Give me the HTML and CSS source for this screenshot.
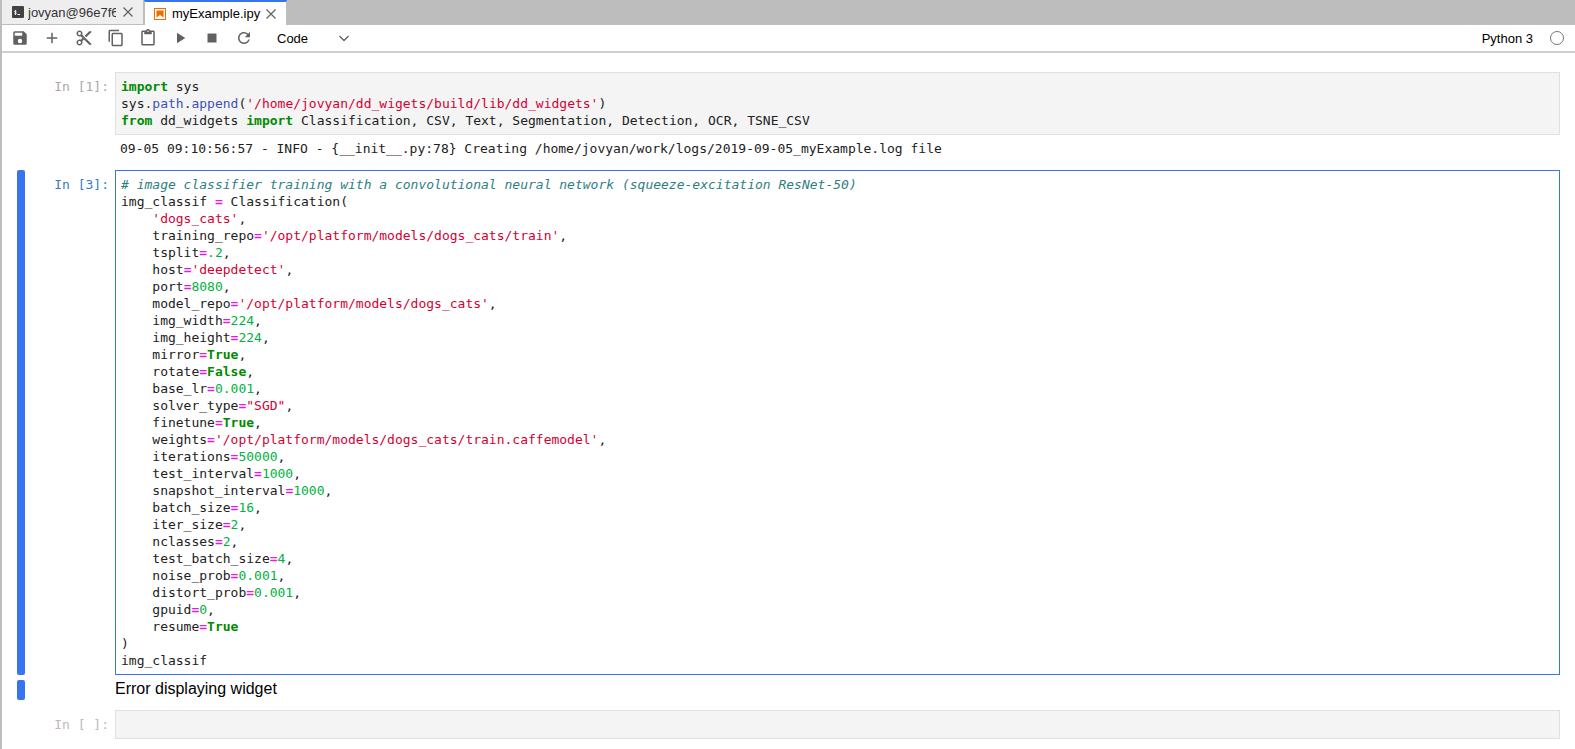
FILE: index.html
```html
<!DOCTYPE html>
<html lang="en">
<head>
    <meta charset="UTF-8">
    <title>myExample.ipynb</title>
    <link rel="stylesheet" href="styles.css">
</head>
<body>

<!-- tab bar -->
<div class="tabbar">
    <div class="tab">
        <svg class="tab-icon" width="14" height="14" viewBox="0 0 14 14"><rect x="1" y="1" width="12" height="12" rx="1" fill="#424242"/><path d="M5.500 6.200c-.4-.6-2-.6-2.100.3-.1 1 2.200.7 2.100 1.700-.1.900-1.800.9-2.200.2M4.500 5v5" fill="none" stroke="#fff" stroke-width=".8"/><rect x="6.500" y="9" width="2.500" height="1" fill="#fff"/></svg>
        <span class="tab-label">jovyan@96e7f6c</span>
        <svg class="tab-close" width="12" height="12" viewBox="0 0 12 12"><path d="M1.500 1.500l9 9M10.500 1.500l-9 9" stroke="#616161" stroke-width="1.200" fill="none"/></svg>
    </div>
    <div class="tab tab-active">
        <svg class="tab-icon" width="14" height="14" viewBox="0 0 14 14"><rect x="1.500" y="1.500" width="11" height="11" fill="none" stroke="#ef6c00"/><path d="M3.500 3.500h7v7l-3.500-2.500-3.500 2.500z" fill="#ef6c00"/></svg>
        <span class="tab-label">myExample.ipy</span>
        <svg class="tab-close" width="12" height="12" viewBox="0 0 12 12"><path d="M1.500 1.500l9 9M10.500 1.500l-9 9" stroke="#616161" stroke-width="1.200" fill="none"/></svg>
    </div>
</div>

<!-- toolbar -->
<div class="toolbar">
    <button class="tool"><svg width="18" height="18" viewBox="0 0 24 24"><path fill="#616161" d="M17 3H5a2 2 0 0 0-2 2v14a2 2 0 0 0 2 2h14a2 2 0 0 0 2-2V7l-4-4zm-5 16a3 3 0 1 1 0-6 3 3 0 0 1 0 6zm3-10H5V5h10v4z"/></svg></button>
    <button class="tool"><svg width="18" height="18" viewBox="0 0 24 24"><path fill="#616161" d="M19 13h-6v6h-2v-6H5v-2h6V5h2v6h6v2z"/></svg></button>
    <button class="tool"><svg width="18" height="18" viewBox="0 0 24 24"><path fill="#616161" d="M9.640 7.640c.23-.5.360-1.050.360-1.640 0-2.210-1.790-4-4-4S2 3.790 2 6s1.790 4 4 4c.59 0 1.140-.13 1.640-.36L10 12l-2.360 2.360C7.140 14.130 6.590 14 6 14c-2.210 0-4 1.790-4 4s1.790 4 4 4 4-1.790 4-4c0-.59-.13-1.140-.36-1.640L12 14l7 7h3v-1L9.640 7.640zM6 8c-1.100 0-2-.89-2-2s.9-2 2-2 2 .89 2 2-.9 2-2 2zm0 12c-1.100 0-2-.89-2-2s.9-2 2-2 2 .89 2 2-.9 2-2 2zm6-7.500c-.28 0-.5-.22-.5-.5s.22-.5.5-.5.500.22.500.5-.22.500-.5.500zM19 3l-6 6 2 2 7-7V3h-3z"/></svg></button>
    <button class="tool"><svg width="18" height="18" viewBox="0 0 24 24"><path fill="#616161" d="M16 1H4c-1.100 0-2 .9-2 2v14h2V3h12V1zm3 4H8c-1.100 0-2 .9-2 2v14c0 1.100.9 2 2 2h11c1.100 0 2-.9 2-2V7c0-1.100-.9-2-2-2zm0 16H8V7h11v14z"/></svg></button>
    <button class="tool"><svg width="18" height="18" viewBox="0 0 24 24"><path fill="#616161" d="M19 2h-4.180C14.400.84 13.300 0 12 0c-1.300 0-2.400.84-2.820 2H5c-1.100 0-2 .9-2 2v16c0 1.100.9 2 2 2h14c1.100 0 2-.9 2-2V4c0-1.100-.9-2-2-2zm-7 0c.55 0 1 .45 1 1s-.45 1-1 1-1-.45-1-1 .45-1 1-1zm7 18H5V4h2v3h10V4h2v16z"/></svg></button>
    <button class="tool"><svg width="18" height="18" viewBox="0 0 24 24"><path fill="#616161" d="M8 5v14l11-7z"/></svg></button>
    <button class="tool"><svg width="18" height="18" viewBox="0 0 24 24"><path fill="#616161" d="M6 6h12v12H6z"/></svg></button>
    <button class="tool"><svg width="18" height="18" viewBox="0 0 24 24"><path fill="#616161" d="M17.650 6.350A7.958 7.958 0 0 0 12 4c-4.420 0-7.990 3.580-7.990 8s3.570 8 7.990 8c3.730 0 6.840-2.550 7.730-6h-2.080A5.990 5.990 0 0 1 12 18c-3.310 0-6-2.690-6-6s2.690-6 6-6c1.660 0 3.140.69 4.220 1.780L13 11h7V4l-2.350 2.350z"/></svg></button>
    <div class="celltype">
        <span>Code</span>
        <svg width="12" height="12" viewBox="0 0 12 12"><path d="M1.500 4l4.500 4.500L10.500 4" fill="none" stroke="#616161" stroke-width="1.300"/></svg>
    </div>
    <div class="kernel">Python 3</div>
    <div class="kernel-status"></div>
</div>

<!-- notebook -->
<div class="notebook">

    <div class="cell first-cell">
        <div class="collapser"></div>
        <div class="prompt">In [1]:</div>
        <div class="editor"><pre><span class="kw">import</span> sys
sys<span class="op2">.</span><span class="prop">path</span><span class="op2">.</span><span class="prop">append</span>(<span class="str">'/home/jovyan/dd_wigets/build/lib/dd_widgets'</span>)
<span class="kw">from</span> dd_widgets <span class="kw">import</span> Classification, CSV, Text, Segmentation, Detection, OCR, TSNE_CSV</pre></div>
    </div>
    <div class="cell output-row">
        <div class="collapser"></div>
        <div class="prompt"></div>
        <pre class="output">09-05 09:10:56:57 - INFO - {__init__.py:78} Creating /home/jovyan/work/logs/2019-09-05_myExample.log file</pre>
    </div>

    <div class="cell active-cell">
        <div class="collapser on"></div>
        <div class="prompt blue">In [3]:</div>
        <div class="editor focused"><pre><span class="cmt"># image classifier training with a convolutional neural network (squeeze-excitation ResNet-50)</span>
img_classif <span class="op">=</span> Classification(
    <span class="str">'dogs_cats'</span>,
    training_repo<span class="op">=</span><span class="str">'/opt/platform/models/dogs_cats/train'</span>,
    tsplit<span class="op">=</span><span class="num">.2</span>,
    host<span class="op">=</span><span class="str">'deepdetect'</span>,
    port<span class="op">=</span><span class="num">8080</span>,
    model_repo<span class="op">=</span><span class="str">'/opt/platform/models/dogs_cats'</span>,
    img_width<span class="op">=</span><span class="num">224</span>,
    img_height<span class="op">=</span><span class="num">224</span>,
    mirror<span class="op">=</span><span class="kw">True</span>,
    rotate<span class="op">=</span><span class="kw">False</span>,
    base_lr<span class="op">=</span><span class="num">0.001</span>,
    solver_type<span class="op">=</span><span class="str">"SGD"</span>,
    finetune<span class="op">=</span><span class="kw">True</span>,
    weights<span class="op">=</span><span class="str">'/opt/platform/models/dogs_cats/train.caffemodel'</span>,
    iterations<span class="op">=</span><span class="num">50000</span>,
    test_interval<span class="op">=</span><span class="num">1000</span>,
    snapshot_interval<span class="op">=</span><span class="num">1000</span>,
    batch_size<span class="op">=</span><span class="num">16</span>,
    iter_size<span class="op">=</span><span class="num">2</span>,
    nclasses<span class="op">=</span><span class="num">2</span>,
    test_batch_size<span class="op">=</span><span class="num">4</span>,
    noise_prob<span class="op">=</span><span class="num">0.001</span>,
    distort_prob<span class="op">=</span><span class="num">0.001</span>,
    gpuid<span class="op">=</span><span class="num">0</span>,
    resume<span class="op">=</span><span class="kw">True</span>
)
img_classif</pre></div>
    </div>
    <div class="cell widget-row">
        <div class="collapser on"></div>
        <div class="prompt"></div>
        <div class="widget-error">Error displaying widget</div>
    </div>

    <div class="cell last-cell">
        <div class="collapser"></div>
        <div class="prompt dim">In [ ]:</div>
        <div class="editor empty"></div>
    </div>

</div>

</body>
</html>
```
FILE: styles.css
```css
html, body {
    margin: 0;
    padding: 0;
    height: 100%;
    overflow: hidden;
}
body {
    font-family: "Liberation Sans", Arial, sans-serif;
    background-color: #fff;
    border-left: 2px solid #bdbdbd;
    box-sizing: border-box;
    color: #000;
}
pre {
    margin: 0;
    font-family: "DejaVu Sans Mono", monospace;
    font-size: 13px;
    line-height: 17px;
    color: #212121;
}

/* tab bar */
.tabbar {
    display: flex;
    height: 25px;
    background-color: #bdbdbd;
}
.tab {
    display: flex;
    align-items: center;
    box-sizing: border-box;
    width: 142px;
    height: 24px;
    padding: 0 9px 0 9px;
    background-color: #eee;
    border-right: 1px solid #bdbdbd;
    font-size: 13px;
    color: #333;
}
.tab-active {
    width: 143px;
    height: 25px;
    background-color: #fff;
    border-top: 2px solid #3873f0;
    border-left: 1px solid #bdbdbd;
    border-right: 1px solid #bdbdbd;
    padding-left: 8px;
    color: #000;
}
.tab-label {
    flex: 1;
    overflow: hidden;
    white-space: nowrap;
    margin: 0 6px 0 3px;
}
.tab-active .tab-label {
    margin: 0 4px 0 5px;
}
.tab-icon, .tab-close {
    flex: none;
}

/* toolbar */
.toolbar {
    display: flex;
    align-items: center;
    box-sizing: border-box;
    height: 28px;
    padding: 0 11px 0 2px;
    background-color: #fff;
    border-bottom: 2px solid #cfcfcf;
}
.tool {
    display: flex;
    justify-content: center;
    align-items: center;
    width: 32px;
    height: 26px;
    padding: 0;
    border: none;
    background: none;
}
.celltype {
    display: flex;
    justify-content: space-between;
    align-items: center;
    width: 73px;
    margin-left: 17px;
    font-size: 13px;
}
.kernel {
    margin-left: auto;
    font-size: 13px;
}
.kernel-status {
    width: 12px;
    height: 12px;
    margin-left: 17px;
    border: 1.500px solid #757575;
    border-radius: 50%;
}

/* notebook */
.notebook {
    padding: 19px 15px 0 15px;
}
.cell {
    display: flex;
}
.collapser {
    flex: none;
    width: 8px;
    border-radius: 2px;
}
.collapser.on {
    background-color: #3873f0;
}
.prompt {
    flex: none;
    width: 77px;
    padding: 6px 6px 0 0;
    margin-left: 7px;
    text-align: right;
    font-family: "DejaVu Sans Mono", monospace;
    font-size: 13px;
    line-height: 17px;
    color: #aaa;
}
.prompt.blue {
    color: #307fc1;
}
.prompt.dim {
    color: #bbb;
}
.editor {
    flex: 1;
    min-width: 0;
    box-sizing: border-box;
    padding: 5px;
    background-color: #f4f4f4;
    border: 1px solid #e0e0e0;
}
.editor.focused {
    background-color: #fff;
    border-color: #3873f0;
}
.editor.empty {
    height: 29px;
}
.output {
    padding: 5px 6px 5px 5px;
}
.output-row {
    margin-bottom: 8px;
}
.active-cell {
    margin-top: 2px;
}
.widget-row {
    margin-top: 5px;
    height: 20px;
}
.widget-error {
    font-size: 16px;
    line-height: 18px;
}
.last-cell {
    margin-top: 10px;
}
.kw {
    color: #008a00;
    font-weight: bold;
}
.op {
    color: #e01ee0;
    font-weight: bold;
}
.op2 {
    color: #333;
}
.prop {
    color: #3f51b5;
}
.str {
    color: #d40032;
}
.num {
    color: #00b341;
}
.cmt {
    color: #2e8080;
    font-style: italic;
}
```
